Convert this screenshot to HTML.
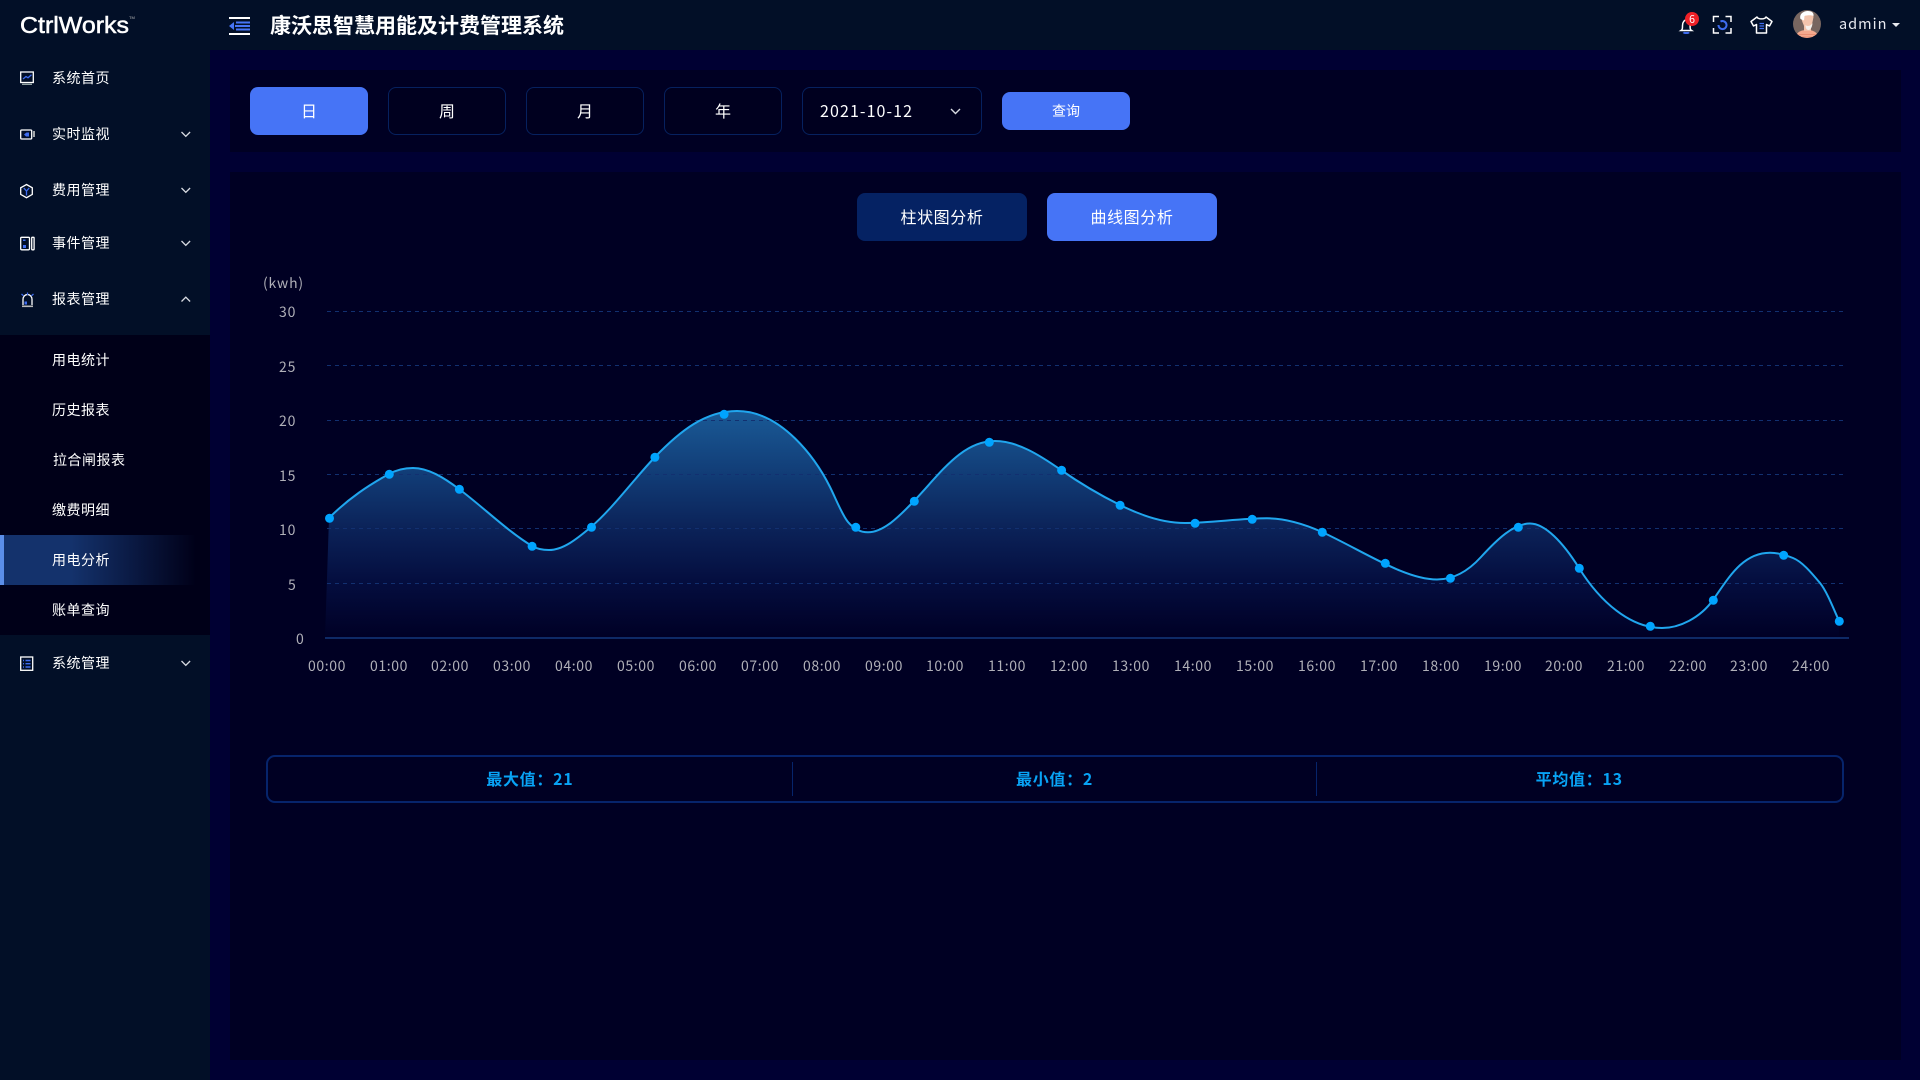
<!DOCTYPE html>
<html lang="zh-CN"><head><meta charset="utf-8"><title>康沃思智慧用能及计费管理系统</title>
<style>
*{box-sizing:border-box;margin:0;padding:0}
html,body{width:1920px;height:1080px;overflow:hidden;background:#000033;font-family:"Noto Sans CJK SC","Liberation Sans",sans-serif;color:#fff}
.a{position:absolute}
.hdr{left:0;top:0;width:1920px;height:50px;background:#020f27}
.side{left:0;top:50px;width:210px;height:1030px;background:#020f27}
.sub{left:0;top:335px;width:210px;height:300px;background:#000018}
.act{left:0;top:535px;width:196px;height:50px;background:linear-gradient(90deg,#14326c 0,#14326c 35%,#000018 100%);border-left:4px solid #5b8ee8}
.m{position:absolute;left:52px;height:24px;line-height:24px;font-size:14px;letter-spacing:.5px;white-space:nowrap;color:#fff}
.p1{left:230px;top:70px;width:1671px;height:82px;background:#000023}
.p2{left:230px;top:172px;width:1671px;height:888px;background:#000023}
.b{position:absolute;display:flex;align-items:center;justify-content:center;border-radius:8px;font-size:16px;color:#fff;white-space:nowrap;padding-bottom:2px}
.o{top:87px;width:118px;height:48px;border:1px solid #06215f;background:#00001f}
.title{left:270px;top:8px;height:34px;line-height:34px;font-size:21px;font-weight:700;white-space:nowrap}
.stat{left:265.500px;top:755px;width:1578px;height:48px;border:2px solid #06246b;border-radius:9px;display:flex;align-items:center}
.stat div{flex:1;text-align:center;color:#08a3f5;font-size:16px;font-weight:700;letter-spacing:.7px;line-height:42px;height:44px;white-space:nowrap}
svg text{font-family:"Noto Sans CJK SC","Liberation Sans",sans-serif}
</style></head><body>
<div class="a hdr"></div><div class="a side"></div><div class="a sub"></div><div class="a act"></div>
<div class="a p1"></div><div class="a p2"></div>

<div class="a title">康沃思智慧用能及计费管理系统</div>

<div class="m" style="top:66px">系统首页</div>
<div class="m" style="top:122px">实时监视</div>
<div class="m" style="top:178px">费用管理</div>
<div class="m" style="top:231px">事件管理</div>
<div class="m" style="top:287px">报表管理</div>
<div class="m" style="top:348px">用电统计</div>
<div class="m" style="top:398px">历史报表</div>
<div class="m" style="top:448px;left:53px">拉合闸报表</div>
<div class="m" style="top:498px">缴费明细</div>
<div class="m" style="top:548px">用电分析</div>
<div class="m" style="top:598px">账单查询</div>
<div class="m" style="top:651px">系统管理</div>

<div class="b" style="left:250px;top:87px;width:118px;height:48px;background:#4674f6">日</div>
<div class="b o" style="left:388px">周</div>
<div class="b o" style="left:526px">月</div>
<div class="b o" style="left:664px">年</div>
<div class="b o" style="left:802px;width:180px;justify-content:flex-start;padding-left:17px;letter-spacing:1.1px">2021-10-12</div>
<div class="b" style="left:1002px;top:92px;width:128px;height:38px;background:#4674f6;font-size:14px;padding-bottom:0">查询</div>
<div class="b" style="left:857px;top:193px;width:170px;height:48px;background:#052263;letter-spacing:.6px">柱状图分析</div>
<div class="b" style="left:1047px;top:193px;width:170px;height:48px;background:#4674f6;letter-spacing:.6px">曲线图分析</div>

<div class="a stat"><div>最大值：21</div><div>最小值：2</div><div>平均值：13</div></div>
<div class="a" style="left:792px;top:762px;width:1px;height:34px;background:#06246b"></div>
<div class="a" style="left:1316px;top:762px;width:1px;height:34px;background:#06246b"></div>

<svg class="a" style="left:0;top:0" width="1920" height="1080" viewBox="0 0 1920 1080" xmlns="http://www.w3.org/2000/svg">
<defs><linearGradient id="ar" x1="0" y1="0" x2="0" y2="1">
<stop offset="0" stop-color="#1a5a96"/><stop offset=".28" stop-color="#113c76"/><stop offset=".52" stop-color="#0b2258"/><stop offset=".76" stop-color="#040d3e"/><stop offset="1" stop-color="#000025"/>
</linearGradient>
<clipPath id="av"><circle cx="1807" cy="24" r="14"/></clipPath></defs>

<!-- logo -->
<text x="20" y="33" font-size="23" textLength="109" lengthAdjust="spacingAndGlyphs" fill="#fff" stroke="#fff" stroke-width=".5" style="font-family:'Liberation Sans',sans-serif">CtrlWorks</text>
<text x="129" y="19" font-size="4" fill="#bbb" style="font-family:'Liberation Sans',sans-serif">TM</text>

<!-- toggle -->
<path d="M229 18h21M229 34h21" stroke="#fff" stroke-width="2"/>
<path d="M229 26l5-4v8z" fill="#4674f6"/>
<path d="M236 22.500h14M235 26h15M236 29.500h14" stroke="#4674f6" stroke-width="2"/>

<!-- sidebar icons -->
<g fill="none" stroke="#fff" stroke-width="1.300">
<rect x="20.700" y="72" width="12.600" height="10.500"/>
<path d="M23 79l3-2.500 2 1.300 3.500-3" stroke="#3f6df0"/>
<path d="M22 84.300h10" stroke="#9aa"/>
<rect x="20.700" y="130" width="11" height="9" rx="1"/>
<path d="M34 131v6" stroke="#ccc" stroke-width="1.600"/>
<path d="M24 134.500l2.500-2h2.500v4h-3z" fill="#3f6df0" stroke="none"/>
<path d="M26.500 184.500l5.800 3.300v6.600l-5.800 3.300-5.800-3.300v-6.600z"/>
<path d="M23.800 188l2.700 3 2.700-3M26.500 191v4.500" stroke="#3f6df0"/>
<rect x="20.700" y="237.300" width="8.800" height="12.500" rx="1"/>
<rect x="31.700" y="237.300" width="2.400" height="12.500" rx=".5"/>
<rect x="23" y="245" width="3" height="3" fill="#3f6df0" stroke="none"/>
<rect x="23" y="239.500" width="2.500" height="1.500" fill="#3f6df0" stroke="none"/>
<path d="M23 305v-5.500a4.500 5 0 0 1 9 0v5.500"/>
<path d="M22 306.300h11" stroke="#bbb" stroke-width="1.600"/>
<path d="M27.500 292.500v2.500M21.500 294l2 1.800M33.500 294l-2 1.800" stroke="#3f6df0"/>
<rect x="24.500" y="301.500" width="2.500" height="3" fill="#3f6df0" stroke="none"/>
<rect x="20.700" y="657" width="12" height="13.300"/>
<path d="M23 660.500h1M25.500 660.500h5M23 663.700h1M25.500 663.700h5M23 667h1M25.500 667h5" stroke="#3f6df0" stroke-width="1.400"/>
</g>
<!-- chevrons -->
<g fill="none" stroke="#d8dbe2" stroke-width="1.300">
<path d="M181.500 132l4.300 4.300 4.300-4.300M181.500 188l4.300 4.300 4.300-4.300M181.500 241l4.300 4.300 4.300-4.300M181.500 661l4.300 4.300 4.300-4.300M181.500 301.500l4.300-4.300 4.300 4.300"/>
<path d="M951 109l4.500 4.500 4.500-4.500" stroke-width="1.400"/>
</g>

<!-- top right -->
<g fill="none" stroke="#fff" stroke-width="1.500">
<path d="M1681 30.500c1.500-1 1.500-2 1.500-5 0-3.500 2-5.500 3.800-5.500s3.800 2 3.800 5.500c0 3 0 4 1.500 5z"/>
<path d="M1683.500 32.300c.7 1 4.800 1 5.500 0" stroke="#3f6df0" stroke-width="2"/>
<path d="M1713.500 22v-5.500h5.500M1725.500 16.500h5.500v5.500M1731 28v5h-5.500M1719 33h-5.500v-5"/>
<path d="M1718.500 25a4 4 0 1 0 2-3.400" stroke="#3f6df0" stroke-width="2"/>
<path d="M1757 17l-6 4.500 2.500 4.500 3-1.500V33h10v-8.500l3 1.500 2.500-4.500-6-4.500c-1 2.500-8 2.500-9 0z" stroke-linejoin="round"/>
<path d="M1759.500 23.500h4.500M1759.500 26h4.500M1759.500 28.500h4.500" stroke="#3f6df0" stroke-width="1.300"/>
</g>
<circle cx="1692" cy="19" r="7" fill="#ee2027"/>
<text x="1692" y="23" font-size="10.500" fill="#fff" text-anchor="middle">6</text>
<g clip-path="url(#av)">
<rect x="1793" y="10" width="28" height="28" fill="#786660"/>
<path d="M1796 38c0-6 5-8 11-8s11 2 11 8z" fill="#f4a98e"/>
<path d="M1797 34.500h20M1796 37h22" stroke="#e88f74" stroke-width="1"/>
<rect x="1804" y="24" width="7" height="7" fill="#f2c0a8"/>
<path d="M1801.500 19c-1-5 3-7 7-7 3.500 0 5 2 5 5l-1 5c-1 5-2 8-4.500 8-2 0-3.500-2-4-4-.5-2-1.500-3-2.500-7z" fill="#f3c4ad"/>
<path d="M1800.500 19c-1.500-5 3-8 7.500-8 4 0 6 2 5.500 5-2-1-6-1-9 0l-.5 4.500z" fill="#fff"/>
<path d="M1805.500 25c1.500 1.500 5 1.500 7-2-.2 4-2 7-4 7s-3-2-3-5z" fill="#f5f0ec"/>
</g>
<text x="1839" y="29" font-size="14.500" fill="#e8eaf0" letter-spacing="1">admin</text>
<path d="M1892 23h8l-4 4z" fill="#e8eaf0"/>

<!-- area -->
<path d="M329 518C349 498 369 485 389 474C397 469.600 405 468 413 468C428.300 468 443.700 477.500 459 489C483.300 507.200 507.700 531.400 532 546C537.700 549.400 543.300 550 549 550C563 550 577 538.900 591 527C612.300 508.900 633.700 479.400 655 457C680 431 705 411 737 411C782 411 816 459 830 487C836 499 842 514.800 848 522C854.700 530 861.300 532.300 868 532.300C883.300 532.300 898.700 517 914 501C941 472.600 962 441 995 441C1017 441 1039 454.600 1061 470C1080.700 483.800 1100.300 495.200 1120 505C1141.700 515.800 1163.300 523 1185 523C1212.300 523 1239.700 518.300 1267 518.300C1285.300 518.300 1303.700 523.800 1322 532C1365 552 1405 579.500 1437 579.500C1451.700 579.500 1466.300 573.200 1481 557C1497.300 539.100 1513.700 523.500 1530 523.500C1545 523.500 1563 542.400 1579 568C1600 601.600 1630 628 1662 628C1679 628 1700 618.200 1713 600C1728 579 1742 552.700 1770 552.700C1777.700 552.700 1785.300 554.900 1793 558C1802 561.600 1811 572.200 1820 583C1826.300 590.600 1832.700 606.500 1839 621L1839 638L325 638Z" fill="url(#ar)"/>
<!-- chart grid -->
<g stroke="#123070" stroke-width="1" stroke-dasharray="4 4">
<path d="M327 311.500H1844M327 365.500H1844M327 420.500H1844M327 474.500H1844M327 528.500H1844M327 583.500H1844"/>
</g>
<path d="M325 638H1849" stroke="#0e2a66" stroke-width="2"/>
<path d="M329 518C349 498 369 485 389 474C397 469.600 405 468 413 468C428.300 468 443.700 477.500 459 489C483.300 507.200 507.700 531.400 532 546C537.700 549.400 543.300 550 549 550C563 550 577 538.900 591 527C612.300 508.900 633.700 479.400 655 457C680 431 705 411 737 411C782 411 816 459 830 487C836 499 842 514.800 848 522C854.700 530 861.300 532.300 868 532.300C883.300 532.300 898.700 517 914 501C941 472.600 962 441 995 441C1017 441 1039 454.600 1061 470C1080.700 483.800 1100.300 495.200 1120 505C1141.700 515.800 1163.300 523 1185 523C1212.300 523 1239.700 518.300 1267 518.300C1285.300 518.300 1303.700 523.800 1322 532C1365 552 1405 579.500 1437 579.500C1451.700 579.500 1466.300 573.200 1481 557C1497.300 539.100 1513.700 523.500 1530 523.500C1545 523.500 1563 542.400 1579 568C1600 601.600 1630 628 1662 628C1679 628 1700 618.200 1713 600C1728 579 1742 552.700 1770 552.700C1777.700 552.700 1785.300 554.900 1793 558C1802 561.600 1811 572.200 1820 583C1826.300 590.600 1832.700 606.500 1839 621" fill="none" stroke="#20a6ee" stroke-width="2"/>
<!-- dots -->
<g fill="#00a4ff">
<circle cx="329.500" cy="518.300" r="4.500"/><circle cx="389.300" cy="474.300" r="4.500"/><circle cx="459.400" cy="489.300" r="4.500"/><circle cx="532.100" cy="546.300" r="4.500"/><circle cx="591.500" cy="527.300" r="4.500"/><circle cx="654.900" cy="457.300" r="4.500"/><circle cx="724.100" cy="414.300" r="4.500"/><circle cx="855.800" cy="527.300" r="4.500"/><circle cx="914.300" cy="501.300" r="4.500"/><circle cx="989.300" cy="442.300" r="4.500"/><circle cx="1061.600" cy="470.300" r="4.500"/><circle cx="1120.100" cy="505.300" r="4.500"/><circle cx="1195.100" cy="523.300" r="4.500"/><circle cx="1252.200" cy="519.300" r="4.500"/><circle cx="1322.300" cy="532.300" r="4.500"/><circle cx="1385.300" cy="563.300" r="4.500"/><circle cx="1450.400" cy="578.300" r="4.500"/><circle cx="1518.300" cy="527.300" r="4.500"/><circle cx="1579.300" cy="568.300" r="4.500"/><circle cx="1650.300" cy="626.300" r="4.500"/><circle cx="1713.300" cy="600.300" r="4.500"/><circle cx="1783.700" cy="555.300" r="4.500"/><circle cx="1839.300" cy="621.300" r="4.500"/>
</g>
<!-- chart labels -->
<g font-size="14" fill="#b0b0b8" letter-spacing=".8">
<text x="263" y="288">(kwh)</text>
<text x="279" y="317">30</text><text x="279" y="372">25</text><text x="279" y="426">20</text><text x="279" y="481">15</text><text x="279" y="535">10</text><text x="288" y="590">5</text><text x="296" y="644">0</text>
</g>
<g font-size="14" fill="#b0b0b8" text-anchor="middle" letter-spacing=".6">
<text x="327" y="671">00:00</text><text x="389" y="671">01:00</text><text x="450" y="671">02:00</text><text x="512" y="671">03:00</text><text x="574" y="671">04:00</text><text x="636" y="671">05:00</text><text x="698" y="671">06:00</text><text x="760" y="671">07:00</text><text x="822" y="671">08:00</text><text x="884" y="671">09:00</text><text x="945" y="671">10:00</text><text x="1007" y="671">11:00</text><text x="1069" y="671">12:00</text><text x="1131" y="671">13:00</text><text x="1193" y="671">14:00</text><text x="1255" y="671">15:00</text><text x="1317" y="671">16:00</text><text x="1379" y="671">17:00</text><text x="1441" y="671">18:00</text><text x="1503" y="671">19:00</text><text x="1564" y="671">20:00</text><text x="1626" y="671">21:00</text><text x="1688" y="671">22:00</text><text x="1749" y="671">23:00</text><text x="1811" y="671">24:00</text>
</g>
</svg>
</body></html>
